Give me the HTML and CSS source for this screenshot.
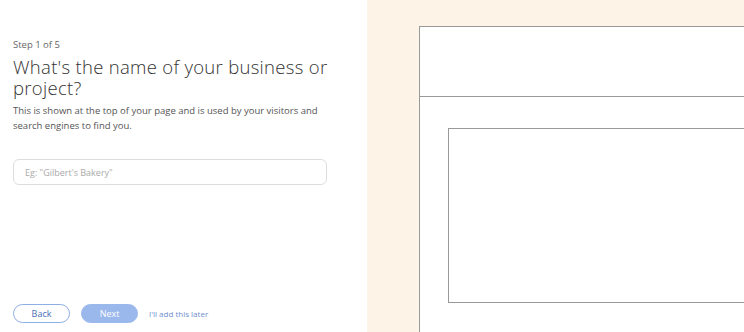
FILE: index.html
```html
<!DOCTYPE html>
<html lang="en">
<head>
    <meta charset="UTF-8">
    <meta name="viewport" content="width=device-width, initial-scale=1.0">
    <title>Create your site</title>
    <link rel="stylesheet" href="styles.css">
</head>
<body>
    <div class="page">
        <div class="form-side">
            <div class="step">Step 1 of 5</div>
            <h1 class="title">What's the name of your business or project?</h1>
            <p class="hint">This is shown at the top of your page and is used by your visitors and search engines to find you.</p>
            <input class="name-input" type="text" placeholder="Eg: &quot;Gilbert's Bakery&quot;">
            <div class="actions">
                <button class="btn btn-back">Back</button>
                <button class="btn btn-next">Next</button>
                <a class="later" href="#">I'll add this later</a>
            </div>
        </div>
        <div class="preview-side">
            <div class="frame">
                <div class="frame-header"></div>
                <div class="frame-body">
                    <div class="frame-hero"></div>
                </div>
            </div>
        </div>
    </div>
</body>
</html>
```

FILE: styles.css
```css
body {
    margin: 0;
    font-family: "Open Sans", Arial, sans-serif;
    background: #fff;
}
.page {
    display: flex;
    height: 332px;
    overflow: hidden;
}
.form-side {
    width: 367px;
    box-sizing: border-box;
    padding: 39px 20px 0 13px;
    display: flex;
    flex-direction: column;
}
.step {
    font-size: 9.5px;
    color: #666;
    line-height: 12px;
}
.title {
    margin: 5px 0 0;
    font-size: 18.5px;
    font-weight: 300;
    line-height: 21px;
    color: #333;
    letter-spacing: 0.3px;
}
.hint {
    margin: 5px 0 0;
    font-size: 9.5px;
    line-height: 15px;
    color: #555;
}
.name-input {
    margin-top: 26px;
    width: 314px;
    height: 26px;
    box-sizing: border-box;
    border: 1px solid #ddd;
    border-radius: 6px;
    padding: 0 11px;
    font-family: inherit;
    font-size: 9px;
    outline: none;
}
.name-input::placeholder {
    color: #aaa;
}
.actions {
    margin-top: auto;
    margin-bottom: 9px;
    display: flex;
    align-items: center;
    gap: 11px;
}
.btn {
    width: 57px;
    height: 19px;
    border-radius: 10px;
    font-family: inherit;
    font-size: 9px;
    padding: 0;
    cursor: pointer;
}
.btn-back {
    background: #fff;
    border: 1px solid #8eaee6;
    color: #4a6fb5;
}
.btn-next {
    background: #9ab8ec;
    border: 1px solid #9ab8ec;
    color: #fff;
}
.later {
    font-size: 8px;
    color: #6f8fd0;
    text-decoration: none;
}
.preview-side {
    flex: 1;
    background: #fdf3e7;
    padding: 26px 0 0 52px;
    overflow: hidden;
}
.frame {
    height: 320px;
    background: #fff;
    border: 1px solid #999;
    border-right: none;
}
.frame-header {
    height: 69px;
    border-bottom: 1px solid #999;
}
.frame-body {
    padding: 31px 0 0 28px;
}
.frame-hero {
    height: 173px;
    border: 1px solid #999;
    border-right: none;
}
```
